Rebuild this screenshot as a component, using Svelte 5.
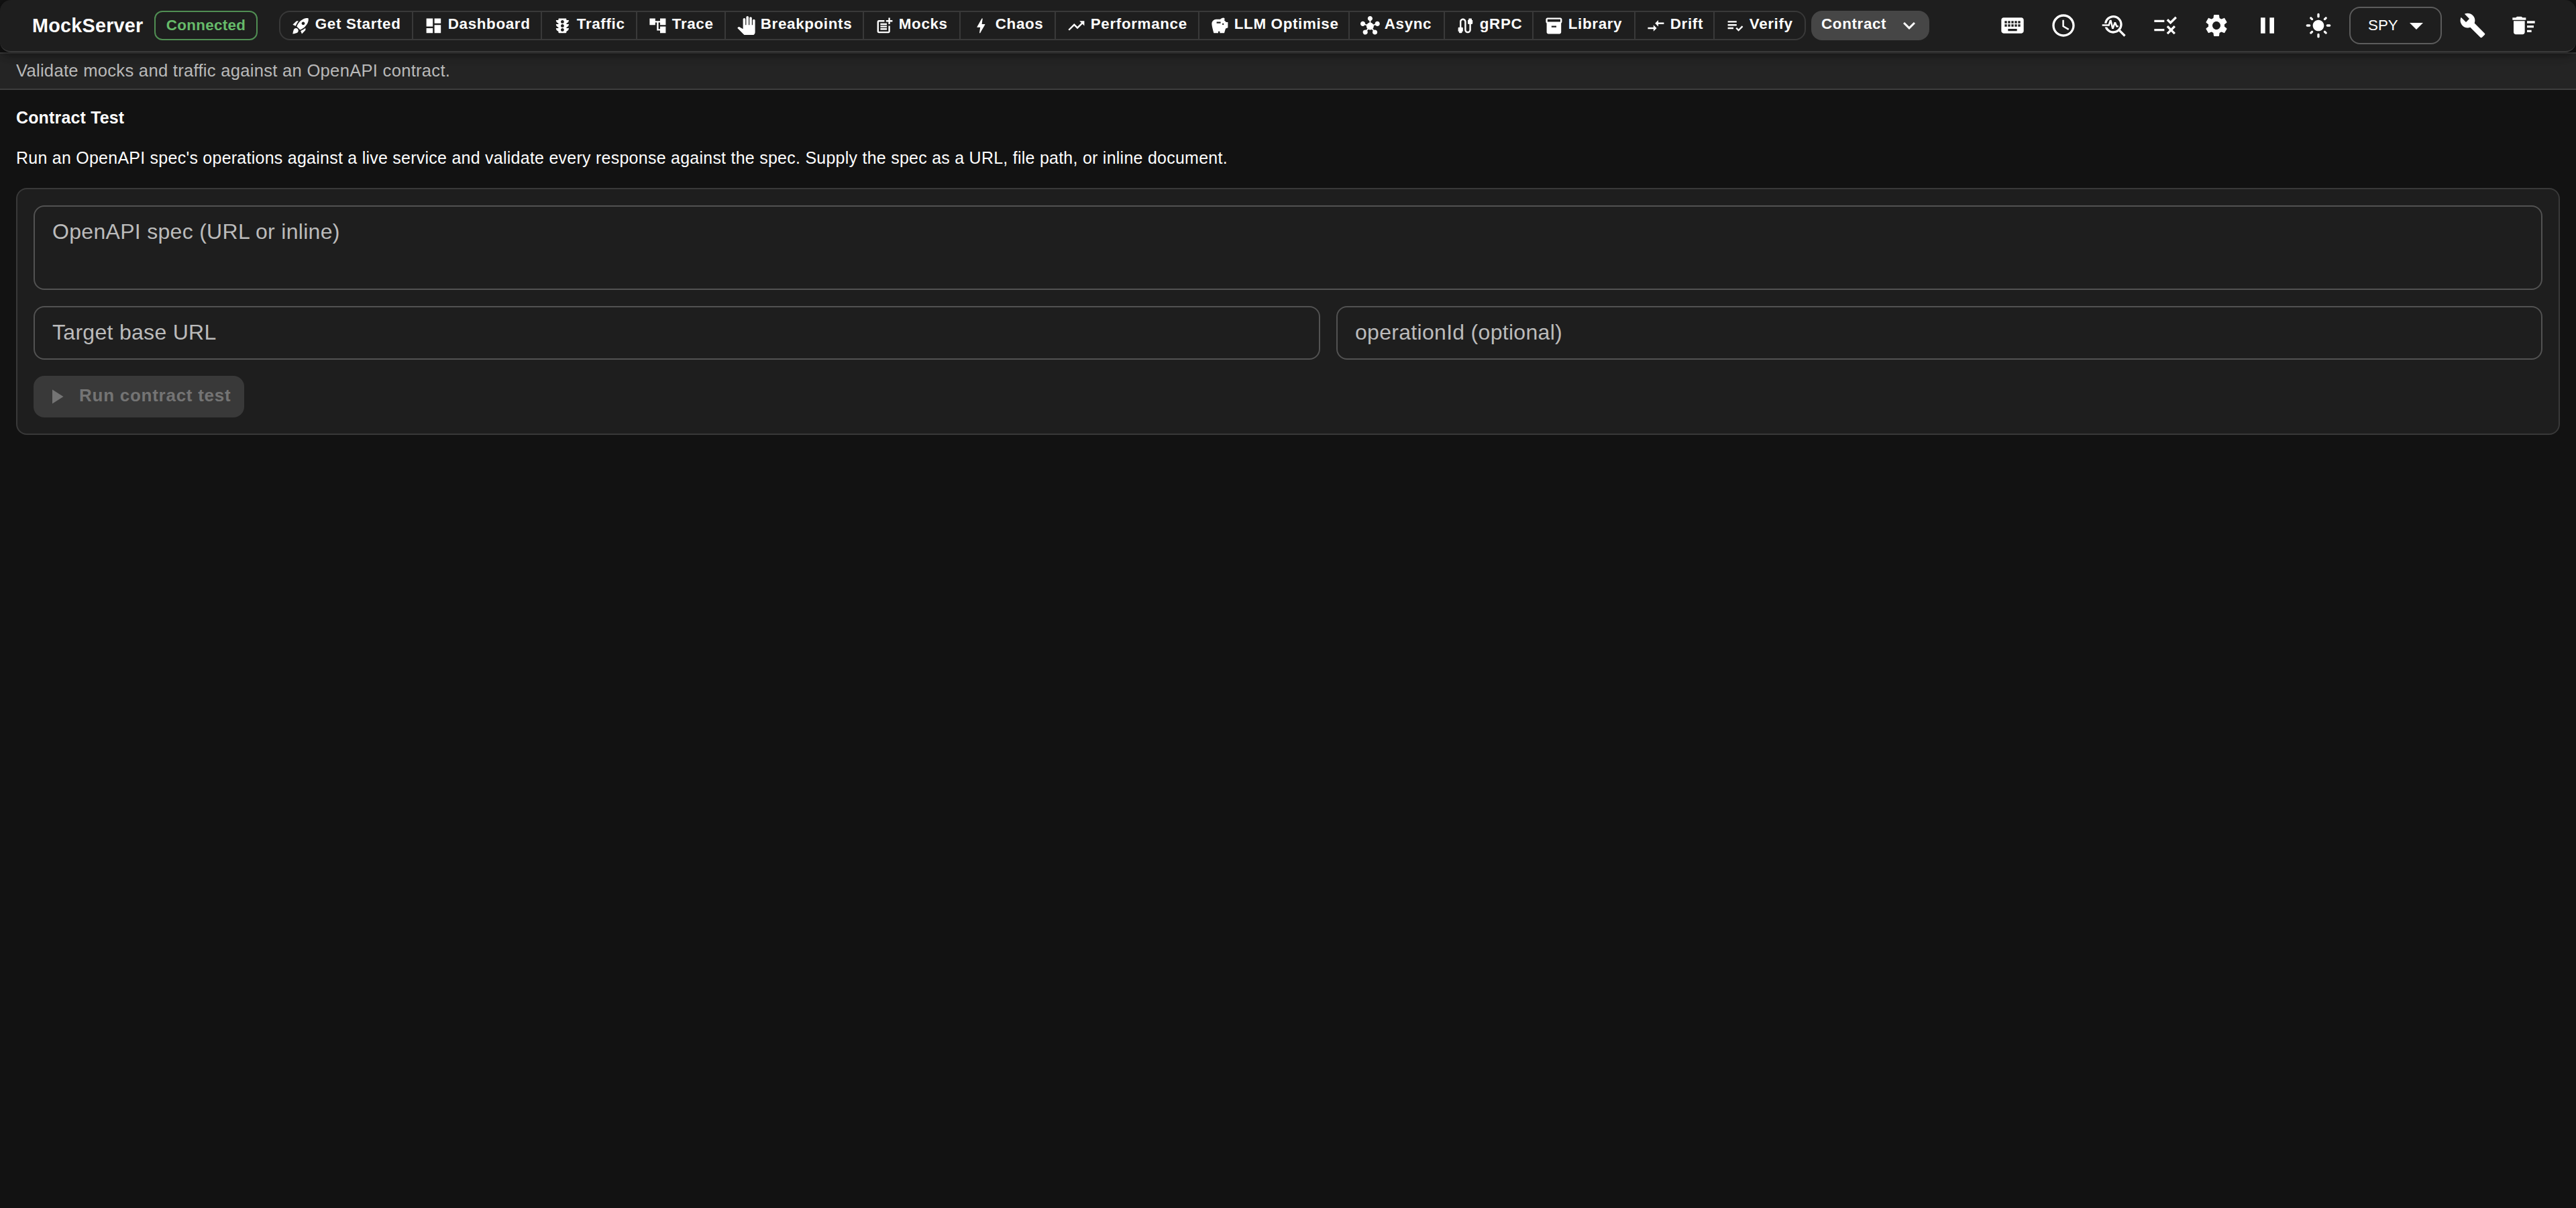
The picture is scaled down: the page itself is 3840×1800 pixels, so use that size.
<script lang="ts">
	interface NavItem {
		label: string
		width: number
		icon: string
	}

	const navItems: NavItem[] = [
		{ label: 'Get Started', width: 200, icon: 'M9.19 6.35c-2.04 2.29-3.44 5.58-3.57 5.89L2 10.69l4.05-4.05c.47-.47 1.15-.68 1.81-.55l1.33.26zM11.17 17s3.74-1.55 5.89-3.7c5.4-5.4 4.5-9.62 4.21-10.57-.95-.3-5.17-1.19-10.57 4.21C8.55 9.09 7 12.83 7 12.83L11.17 17zm6.48-2.19c-2.29 2.04-5.58 3.44-5.89 3.57L13.31 22l4.05-4.05c.47-.47.68-1.15.55-1.81l-.26-1.33zM9 18c0 .83-.34 1.58-.88 2.12C6.94 21.3 2 22 2 22s.7-4.94 1.88-6.12C4.42 15.34 5.17 15 6 15c1.66 0 3 1.34 3 3zm4-9c0-1.1.9-2 2-2s2 .9 2 2-.9 2-2 2-2-.9-2-2z' },
		{ label: 'Dashboard', width: 192, icon: 'M3 13h8V3H3v10zm0 8h8v-6H3v6zm10 0h8V11h-8v10zm0-18v6h8V3h-8z' },
		{ label: 'Traffic', width: 142, icon: 'M20 10h-3V8.86c1.72-.45 3-2 3-3.86h-3V4c0-.55-.45-1-1-1H8c-.55 0-1 .45-1 1v1H4c0 1.86 1.28 3.41 3 3.86V10H4c0 1.86 1.28 3.41 3 3.86V15H4c0 1.86 1.28 3.41 3 3.86V20c0 .55.45 1 1 1h8c.55 0 1-.45 1-1v-1.14c1.72-.45 3-2 3-3.86h-3v-1.14c1.72-.45 3-2 3-3.86zm-8 9c-1.11 0-2-.9-2-2s.89-2 2-2c1.1 0 2 .9 2 2s-.89 2-2 2zm0-5c-1.11 0-2-.9-2-2s.89-2 2-2c1.1 0 2 .9 2 2s-.89 2-2 2zm0-5c-1.11 0-2-.9-2-2 0-1.11.89-2 2-2 1.1 0 2 .89 2 2 0 1.1-.89 2-2 2z' },
		{ label: 'Trace', width: 132, icon: 'M22 11V3h-7v3H9V3H2v8h7V8h2v10h4v3h7v-8h-7v3h-2V8h2v3z' },
		{ label: 'Breakpoints', width: 206, icon: 'M23 5.5V20c0 2.2-1.8 4-4 4h-7.3c-1.08 0-2.1-.43-2.85-1.19L1 14.83s1.26-1.23 1.3-1.25c.22-.19.49-.29.79-.29.22 0 .42.06.6.16.04.01 4.31 2.46 4.31 2.46V4c0-.83.67-1.5 1.5-1.5S11 3.17 11 4v7h1V1.5c0-.83.67-1.5 1.5-1.5S15 .67 15 1.5V11h1V2.5c0-.83.67-1.5 1.5-1.5s1.5.67 1.5 1.5V11h1V5.5c0-.83.67-1.5 1.5-1.5s1.5.67 1.5 1.5z' },
		{ label: 'Mocks', width: 144, icon: 'M17 19.22H5V7h7V5H5c-1.1 0-2 .9-2 2v12c0 1.1.9 2 2 2h12c1.1 0 2-.9 2-2v-7h-2v7.22zM19 2h-2v3h-3v2h3v3h2V7h3V5h-3V2zM7 9h8v2H7zm0 3v2h8v-2H7zm0 3h8v2H7z' },
		{ label: 'Chaos', width: 142, icon: 'M11 21h-1l1-7H7.5c-.58 0-.57-.32-.38-.66.19-.34.05-.08.07-.12C8.48 10.94 10.42 7.54 13 3h1l-1 7h3.5c.49 0 .56.33.47.51l-.07.15C12.96 17.55 11 21 11 21z' },
		{ label: 'Performance', width: 214, icon: 'M16 6l2.29 2.29-4.88 4.88-4-4L2 16.59 3.41 18l6-6 4 4 6.3-6.29L22 12V6z' },
		{ label: 'LLM Optimise', width: 224, icon: 'M19.83 7.5l-2.27-2.27c.07-.42.18-.81.32-1.15.08-.18.12-.37.12-.58 0-.83-.67-1.5-1.5-1.5-1.64 0-3.09.79-4 2h-5C4.46 4 2 6.46 2 9.5S4.5 21 4.5 21H10v-2h2v2h5.5l1.68-5.59 2.82-.94V7.5h-2.17zM13 9H8V7h5v2zm3 2c-.55 0-1-.45-1-1s.45-1 1-1 1 .45 1 1-.45 1-1 1z' },
		{ label: 'Async', width: 142, icon: 'M8.4 18.2c.38.5.6 1.12.6 1.8 0 1.66-1.34 3-3 3s-3-1.34-3-3 1.34-3 3-3c.44 0 .85.09 1.23.26l1.41-1.77c-.92-1.03-1.29-2.39-1.09-3.69l-2.03-.68c-.54.83-1.46 1.38-2.52 1.38-1.66 0-3-1.34-3-3s1.34-3 3-3 3 1.34 3 3c0 .07 0 .14-.01.21l2.03.68c.64-1.21 1.82-2.09 3.22-2.32V5.91C9.96 5.57 9 4.4 9 3c0-1.66 1.34-3 3-3s3 1.34 3 3c0 1.4-.96 2.57-2.25 2.91v2.16c1.4.23 2.58 1.11 3.22 2.32l2.03-.68C18 9.64 18 9.57 18 9.5c0-1.66 1.34-3 3-3s3 1.34 3 3-1.34 3-3 3c-1.06 0-1.98-.55-2.52-1.37l-2.03.68c.2 1.29-.16 2.65-1.09 3.69l1.41 1.77c.38-.18.79-.27 1.23-.27 1.66 0 3 1.34 3 3s-1.34 3-3 3-3-1.34-3-3c0-.68.22-1.3.6-1.8l-1.41-1.77c-1.35.75-3.01.76-4.37 0L8.4 18.2z' },
		{ label: 'gRPC', width: 132, icon: 'M20 5V4c0-.55-.45-1-1-1h-2c-.55 0-1 .45-1 1v1h-1v4c0 .55.45 1 1 1h1v7c0 1.1-.9 2-2 2s-2-.9-2-2V7c0-2.21-1.79-4-4-4S5 4.79 5 7v7H4c-.55 0-1 .45-1 1v4h1v1c0 .55.45 1 1 1h2c.55 0 1-.45 1-1v-1h1v-4c0-.55-.45-1-1-1H7V7c0-1.1.9-2 2-2s2 .9 2 2v10c0 2.21 1.79 4 4 4s4-1.79 4-4v-7h1c.55 0 1-.45 1-1V5h-1z' },
		{ label: 'Library', width: 152, icon: 'M20 2H4c-1 0-2 .9-2 2v3.01c0 .72.43 1.34 1 1.69V20c0 1.1 1.1 2 2 2h14c.9 0 2-.9 2-2V8.7c.57-.35 1-.97 1-1.69V4c0-1-1-2-2-2zm-5 12H9v-2h6v2zm5-7H4V4h16v3z' },
		{ label: 'Drift', width: 118, icon: 'M9.01 14H2v2h7.01v3L13 15l-3.99-4v3zm5.98-1v-3H22V8h-7.01V5L11 9l3.99 4z' },
		{ label: 'Verify', width: 136, icon: 'M3 10h11v2H3zm0-4h11v2H3zm0 8h7v2H3zm17.59-2.07l-4.25 4.24-2.12-2.12-1.41 1.41L16.34 19 22 13.34z' },
	]

	// toolbar buttons left of the mode select
	const actions = [
		{ name: 'Keyboard shortcuts', icon: 'M20 5H4c-1.1 0-1.99.9-1.99 2L2 17c0 1.1.9 2 2 2h16c1.1 0 2-.9 2-2V7c0-1.1-.9-2-2-2zm-9 3h2v2h-2V8zm0 3h2v2h-2v-2zM8 8h2v2H8V8zm0 3h2v2H8v-2zm-1 2H5v-2h2v2zm0-3H5V8h2v2zm9 7H8v-2h8v2zm0-4h-2v-2h2v2zm0-3h-2V8h2v2zm3 3h-2v-2h2v2zm0-3h-2V8h2v2z' },
		{ name: 'Clock', icon: 'M11.99 2C6.47 2 2 6.48 2 12s4.47 10 9.99 10C17.52 22 22 17.52 22 12S17.52 2 11.99 2zM12 20c-4.42 0-8-3.58-8-8s3.58-8 8-8 8 3.58 8 8-3.58 8-8 8zm.5-13H11v6l5.25 3.15.75-1.23-4.5-2.67z' },
		{ name: 'Diagnose', icon: 'M22 20.59l-4.69-4.69C18.37 14.55 19 12.85 19 11c0-4.42-3.58-8-8-8-4.08 0-7.44 3.05-7.93 7h2.02C5.57 7.17 8.03 5 11 5c3.31 0 6 2.69 6 6s-2.69 6-6 6c-2.42 0-4.5-1.44-5.45-3.5H3.4C4.45 16.69 7.46 19 11 19c1.85 0 3.55-.63 4.9-1.69L20.59 22 22 20.59zM8.43 9.69L9.65 15h1.64l1.26-3.78.95 2.28h2V12h-1l-1.25-3h-1.54l-1.12 3.37L9.35 7H7.7l-1.25 4H1v1.5h6.55z' },
		{ name: 'Rules', icon: 'M16.54 11L13 7.46l1.41-1.41 2.12 2.12 4.24-4.24 1.41 1.41L16.54 11zM11 7H2v2h9V7zM21 13.41L19.59 12 17 14.59 14.41 12 13 13.41 15.59 16 13 18.59 14.41 20 17 17.41 19.59 20 21 18.59 18.41 16 21 13.41zM11 15H2v2h9v-2z' },
		{ name: 'Settings', icon: 'M19.14 12.94c.04-.3.06-.61.06-.94 0-.32-.02-.64-.07-.94l2.03-1.58c.18-.14.23-.41.12-.61l-1.92-3.32c-.12-.22-.37-.29-.59-.22l-2.39.96c-.5-.38-1.03-.7-1.62-.94l-.36-2.54c-.04-.24-.24-.41-.48-.41h-3.84c-.24 0-.43.17-.47.41l-.36 2.54c-.59.24-1.13.57-1.62.94l-2.39-.96c-.22-.08-.47 0-.59.22L2.74 8.87c-.12.21-.08.47.12.61l2.03 1.58c-.05.3-.09.63-.09.94s.02.64.07.94l-2.03 1.58c-.18.14-.23.41-.12.61l1.92 3.32c.12.22.37.29.59.22l2.39-.96c.5.38 1.03.7 1.62.94l.36 2.54c.05.24.24.41.48.41h3.84c.24 0 .44-.17.47-.41l.36-2.54c.59-.24 1.13-.56 1.62-.94l2.39.96c.22.08.47 0 .59-.22l1.92-3.32c.12-.22.07-.47-.12-.61l-2.01-1.58zM12 15.6c-1.98 0-3.6-1.62-3.6-3.6s1.62-3.6 3.6-3.6 3.6 1.62 3.6 3.6-1.62 3.6-3.6 3.6z' },
		{ name: 'Pause', icon: 'M6 19h4V5H6v14zm8-14v14h4V5h-4z' },
		{ name: 'Theme', icon: 'M12 7c-2.76 0-5 2.24-5 5s2.24 5 5 5 5-2.24 5-5-2.24-5-5-5zM2 13h2c.55 0 1-.45 1-1s-.45-1-1-1H2c-.55 0-1 .45-1 1s.45 1 1 1zm18 0h2c.55 0 1-.45 1-1s-.45-1-1-1h-2c-.55 0-1 .45-1 1s.45 1 1 1zM11 2v2c0 .55.45 1 1 1s1-.45 1-1V2c0-.55-.45-1-1-1s-1 .45-1 1zm0 18v2c0 .55.45 1 1 1s1-.45 1-1v-2c0-.55-.45-1-1-1s-1 .45-1 1zM5.99 4.58c-.39-.39-1.03-.39-1.41 0-.39.39-.39 1.03 0 1.41l1.06 1.06c.39.39 1.03.39 1.41 0s.39-1.03 0-1.41L5.99 4.58zm12.37 12.37c-.39-.39-1.03-.39-1.41 0-.39.39-.39 1.03 0 1.41l1.06 1.06c.39.39 1.03.39 1.41 0 .39-.39.39-1.03 0-1.41l-1.06-1.06zm1.06-10.96c.39-.39.39-1.03 0-1.41-.39-.39-1.03-.39-1.41 0l-1.06 1.06c-.39.39-.39 1.03 0 1.41s1.03.39 1.41 0l1.06-1.06zM7.05 18.36c.39-.39.39-1.03 0-1.41-.39-.39-1.03-.39-1.41 0l-1.06 1.06c-.39.39-.39 1.03 0 1.41s1.03.39 1.41 0l1.06-1.06z' },
	]

	const tools = [
		{ name: 'Tools', icon: 'M22.7 19l-9.1-9.1c.9-2.3.4-5-1.5-6.9-2-2-5-2.4-7.4-1.3L9 6 6 9 1.6 4.7C.4 7.1.9 10.1 2.9 12.1c1.9 1.9 4.6 2.4 6.9 1.5l9.1 9.1c.4.4 1 .4 1.4 0l2.3-2.3c.5-.4.5-1.1.1-1.4z' },
		{ name: 'Clear', icon: 'M15 16h4v2h-4zm0-8h7v2h-7zm0 4h6v2h-6zM3 18c0 1.1.9 2 2 2h6c1.1 0 2-.9 2-2V8H3v10zM14 5h-3l-1-1H6L5 5H2v2h12z' },
	]
</script>

{#snippet icon(path: string, cls: string)}
	<svg class={cls} viewBox="0 0 24 24" fill="currentColor" aria-hidden="true"><path d={path} /></svg>
{/snippet}

<div class="app">
	<header class="appbar">
		<div class="appbar__title">MockServer</div>
		<div class="chip">Connected</div>

		<nav class="nav">
			{#each navItems as item}
				<button class="nav__item" style="width: {item.width}px">
					{@render icon(item.icon, 'icon-nav')}
					<span class="nav__label">{item.label}</span>
				</button>
			{/each}
		</nav>
		<button class="more">
			<span class="nav__label">Contract</span>
			{@render icon('M16.59 8.59 12 13.17 7.41 8.59 6 10l6 6 6-6z', 'icon-small')}
		</button>

		<div class="toolbar">
			{#each actions as action}
				<button class="icon-button" aria-label={action.name}>
					{@render icon(action.icon, 'icon-tool')}
				</button>
			{/each}
			<button class="select">
				<span>SPY</span>
				{@render icon('M7 10l5 5 5-5z', 'icon-arrow')}
			</button>
			{#each tools as tool}
				<button class="icon-button" aria-label={tool.name}>
					{@render icon(tool.icon, 'icon-tool')}
				</button>
			{/each}
		</div>
	</header>

	<div class="hint">Validate mocks and traffic against an OpenAPI contract.</div>

	<main class="content">
		<h2 class="content__title">Contract Test</h2>
		<p class="content__text">Run an OpenAPI spec's operations against a live service and validate every response against the spec. Supply the spec as a URL, file path, or inline document.</p>

		<section class="card">
			<div class="field field--tall">OpenAPI spec (URL or inline)</div>
			<div class="card__row">
				<div class="field">Target base URL</div>
				<div class="field">operationId (optional)</div>
			</div>
			<button class="run" disabled>
				{@render icon('M8 5v14l11-7z', 'icon-small')}
				<span class="run__label">Run contract test</span>
			</button>
		</section>
	</main>
</div>

<style>
	:global(body) {
		background: #121212;
	}

	.app {
		min-height: 1800px;
		color: #fff;
		font-family: "Liberation Sans", Helvetica, Arial, sans-serif;
	}

	button {
		margin: 0;
		border: none;
		background: none;
		color: inherit;
		font-family: inherit;
	}

	svg {
		display: block;
		flex-shrink: 0;
	}

	.appbar {
		position: relative;
		z-index: 1;
		display: flex;
		align-items: center;
		box-sizing: border-box;
		height: 78px;
		padding: 0 48px;
		background: #1e1e1e;
		border-bottom: 2px solid #393939;
		border-radius: 16px;
		box-shadow: 0 4px 8px -2px rgba(0, 0, 0, 0.2), 0 8px 10px 0 rgba(0, 0, 0, 0.14), 0 2px 20px 0 rgba(0, 0, 0, 0.12);
	}
	.appbar__title {
		width: 166px;
		font-size: 28.8px;
		font-weight: 700;
		letter-spacing: 0.0075em;
	}

	.chip {
		box-sizing: border-box;
		width: 154px;
		height: 44px;
		margin-left: 16px;
		border: 2px solid #508e53;
		border-radius: 12px;
		color: #66bb6a;
		font-size: 22.4px;
		font-weight: 700;
		line-height: 40px;
		letter-spacing: 0.013em;
		text-align: center;
	}

	.nav {
		display: flex;
		margin-left: 32px;
	}
	.nav__item {
		display: flex;
		align-items: center;
		box-sizing: border-box;
		height: 44px;
		padding: 0 0 0 16px;
		border: 2px solid #393939;
		border-left: none;
	}
	.nav__item:first-child {
		border-left: 2px solid #393939;
		border-radius: 16px 0 0 16px;
	}
	.nav__item:last-child {
		border-radius: 0 16px 16px 0;
	}
	.nav__label {
		padding-bottom: 3.5px;
		font-size: 22.4px;
		font-weight: 700;
		letter-spacing: 0.02857em;
		white-space: nowrap;
	}
	.icon-nav {
		width: 28.8px;
		height: 28.8px;
		margin-right: 7px;
	}

	.more {
		display: flex;
		align-items: center;
		justify-content: space-between;
		box-sizing: border-box;
		width: 176px;
		height: 44px;
		margin-left: 8px;
		padding: 0 12px 0 15px;
		background: #464646;
		border-radius: 16px;
	}
	.icon-small {
		width: 36px;
		height: 36px;
	}

	.toolbar {
		display: flex;
		align-items: center;
		gap: 16px;
		margin-left: auto;
	}
	.icon-button {
		padding: 10px;
	}
	.icon-tool {
		width: 40px;
		height: 40px;
	}
	.select {
		display: flex;
		align-items: center;
		justify-content: space-between;
		box-sizing: border-box;
		width: 138px;
		height: 56px;
		padding: 0 12px 0 26px;
		border: 2px solid #5c5c5c;
		border-radius: 16px;
		font-size: 22.4px;
	}
	.icon-arrow {
		width: 48px;
		height: 48px;
	}

	.hint {
		box-sizing: border-box;
		height: 56px;
		padding: 0 24px;
		background: #242424;
		border-top: 2px solid #3a3a3a;
		border-bottom: 2px solid #3e3e3e;
		color: #b9b9b9;
		font-size: 25.6px;
		line-height: 50px;
		letter-spacing: 0.01071em;
	}

	.content {
		padding: 24px;
	}
	.content__title {
		height: 40px;
		margin: 0 0 22px;
		font-size: 24.96px;
		font-weight: 700;
		line-height: 35px;
		letter-spacing: 0.00714em;
	}
	.content__text {
		height: 36px;
		margin: 0 0 24px;
		font-size: 24.96px;
		line-height: 31px;
		letter-spacing: 0.01071em;
	}

	.card {
		display: flex;
		flex-direction: column;
		align-items: stretch;
		gap: 24px;
		padding: 24px;
		background: #1e1e1e;
		border: 2px solid #393939;
		border-radius: 16px;
	}
	.card__row {
		display: grid;
		grid-template-columns: 1918fr 1798fr;
		gap: 24px;
	}

	.field {
		box-sizing: border-box;
		height: 80px;
		padding: 0 26px;
		border: 2px solid #525252;
		border-radius: 16px;
		color: #bbb;
		font-size: 32px;
		line-height: 74px;
		letter-spacing: 0.00938em;
	}
	.field--tall {
		height: 126px;
	}

	.run {
		display: flex;
		align-items: center;
		align-self: flex-start;
		gap: 16px;
		height: 62px;
		padding: 0 20px 0 16px;
		background: #393939;
		border-radius: 16px;
		color: #747474;
	}
	.run__label {
		padding-bottom: 4px;
		font-size: 26px;
		font-weight: 700;
		letter-spacing: 0.02857em;
	}
</style>
